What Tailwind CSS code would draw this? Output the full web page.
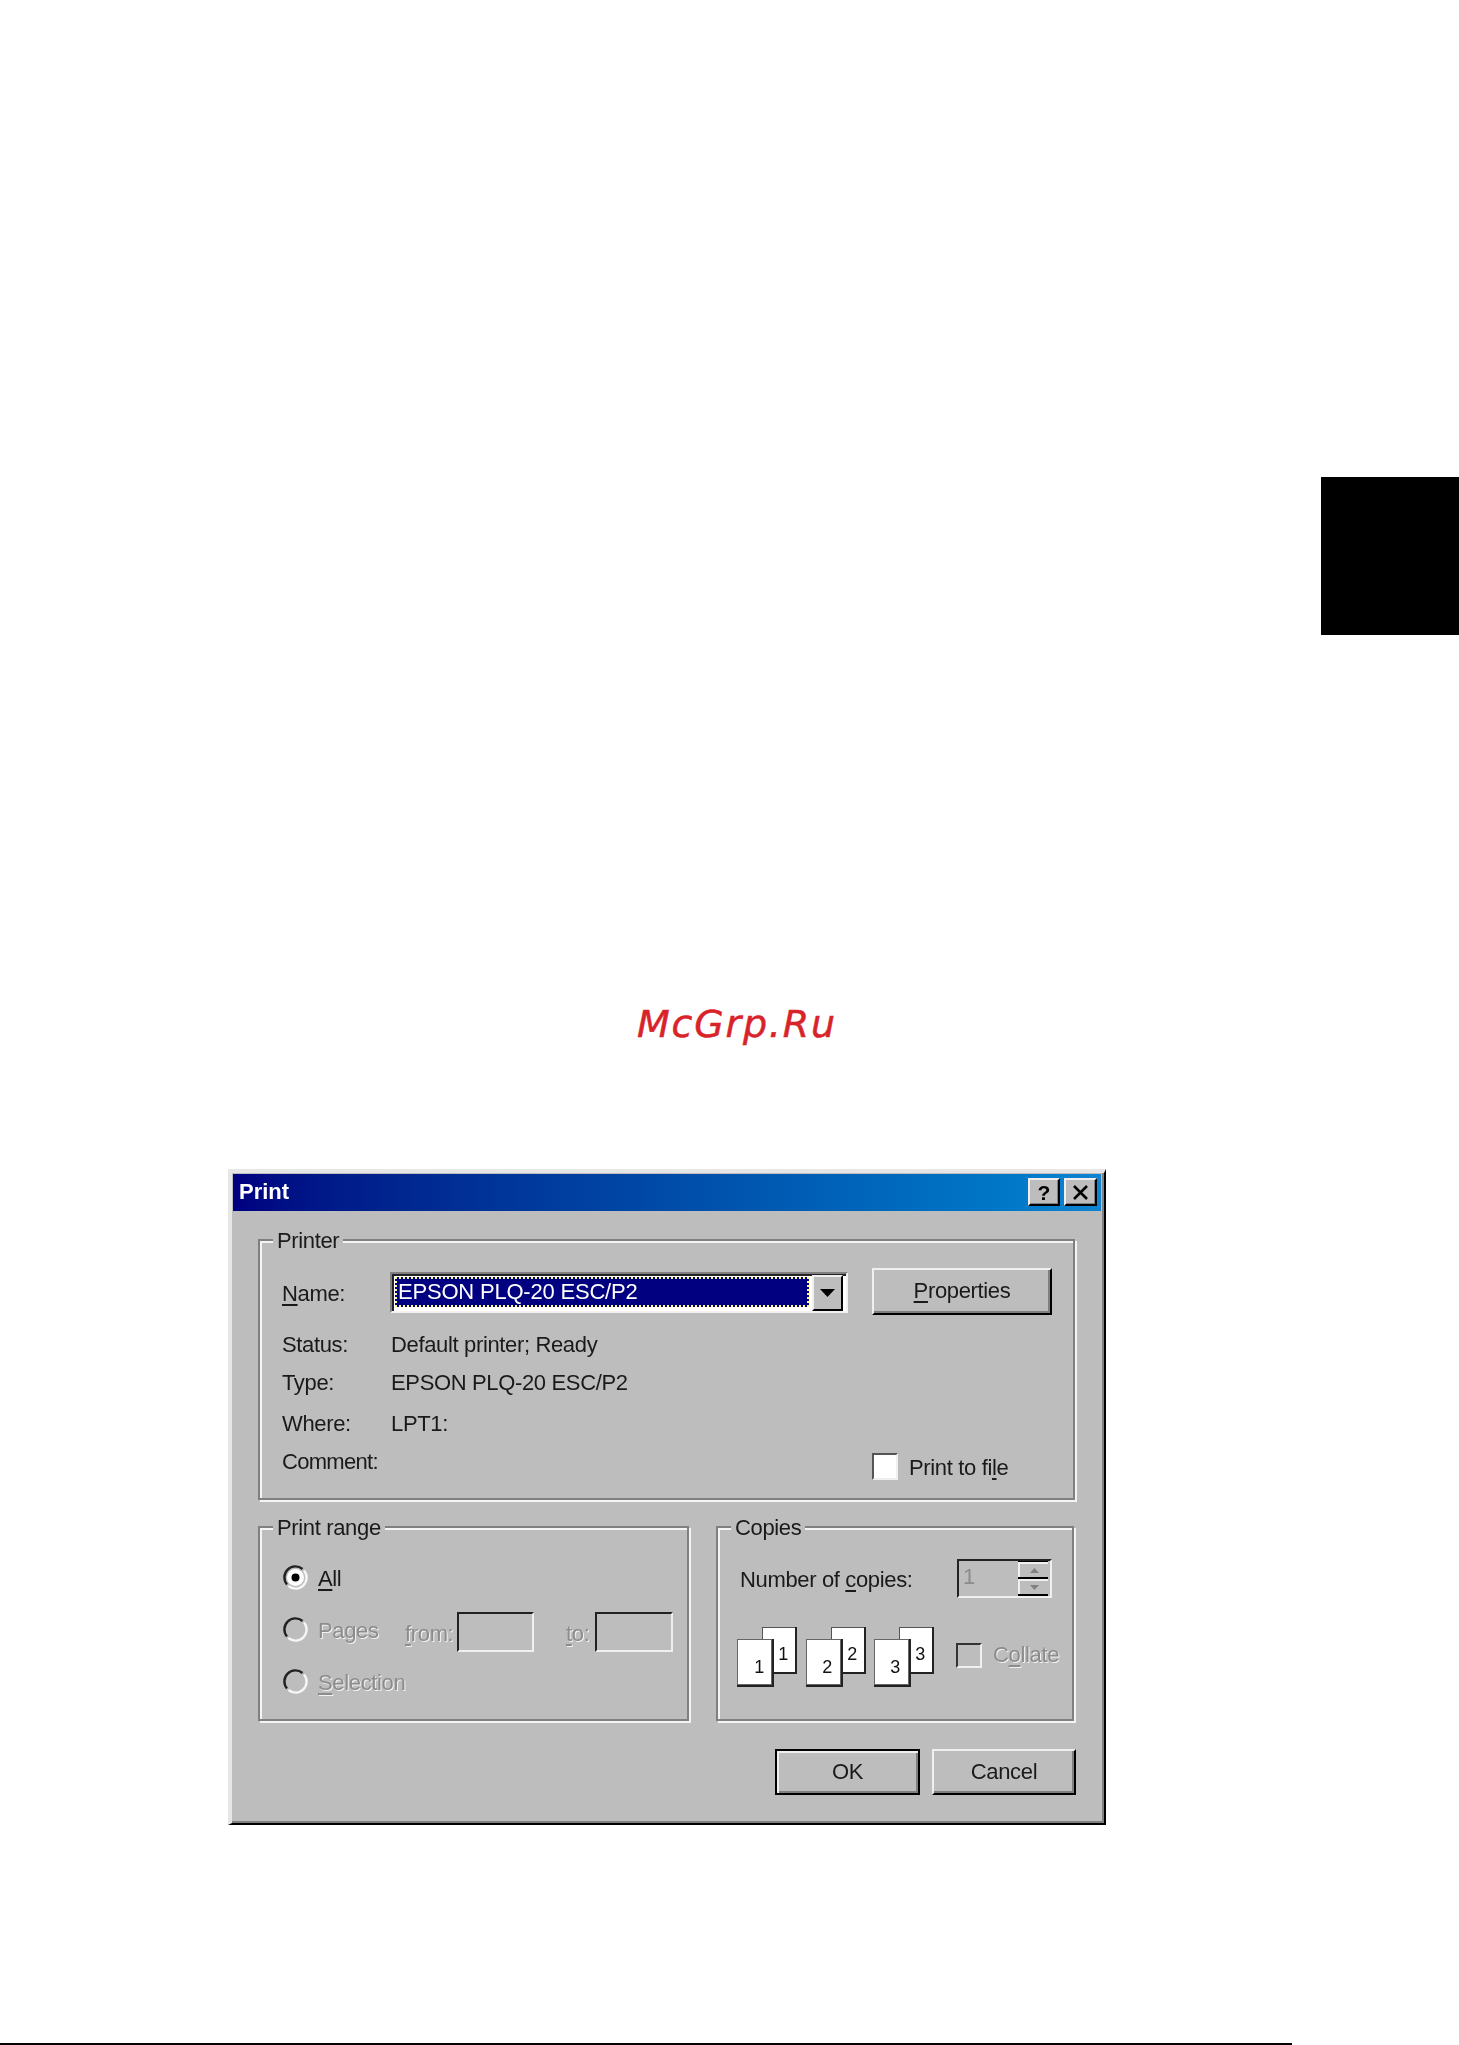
<!DOCTYPE html>
<html lang="en">
<head>
  <meta charset="UTF-8" />
  <title>Print</title>
  <script src="https://cdn.jsdelivr.net/npm/@tailwindcss/browser@4"></script>
</head>
<body class="w-[1459px] h-[2045px] flex flex-col bg-white overflow-hidden font-['Liberation_Sans',sans-serif]">

  <!-- Black index tab -->
  <div class="mt-[477px] self-end w-[138px] h-[158px] bg-black"></div>

  <!-- Watermark -->
  <div class="mt-[367px] ml-[637px] font-['DejaVu_Sans',sans-serif] italic text-[38px] leading-[44px] tracking-[1.8px] text-[#d9232b] [-webkit-text-stroke:0.5px_#d9232b]">McGrp.Ru</div>

  <!-- Print dialog -->
  <div class="mt-[123px] ml-[228px] w-[878px] h-[656px] bg-[#bdbdbd] border-t-4 border-l-4 border-r-2 border-b-2 border-t-[#e6e6e6] border-l-[#e6e6e6] border-r-black border-b-black shadow-[inset_-2px_-2px_0_#808080] blur-[0.4px] text-[22px] tracking-[-0.35px] text-[#1a1a1a]">

    <!-- Title bar -->
    <div class="mt-px ml-px w-[868px] h-[37px] pl-[6px] pr-1 flex justify-between bg-linear-to-r from-[#000080] to-[#1084d0]">
      <span class="font-bold text-white leading-[36px] tracking-normal text-[22px]">Print</span>
      <div class="flex gap-1 pt-1">
        <div class="w-8 h-7 bg-[#bdbdbd] border-2 border-t-[#efefef] border-l-[#efefef] border-r-black border-b-black shadow-[inset_-1px_-1px_0_#808080] flex items-center justify-center font-bold text-black text-[21px] leading-none tracking-normal">?</div>
        <div class="w-[33px] h-7 bg-[#bdbdbd] border-2 border-t-[#efefef] border-l-[#efefef] border-r-black border-b-black shadow-[inset_-1px_-1px_0_#808080] flex items-center justify-center">
          <svg width="17" height="15" viewBox="0 0 17 15"><path d="M2 1 L15 14 M15 1 L2 14" stroke="#000" stroke-width="2.6" fill="none"/></svg>
        </div>
      </div>
    </div>

    <div class="pl-[26px] pr-[28px]">

      <!-- Printer group -->
      <div class="relative mt-[28px] w-[817px] h-[261px] border-2 border-[#808080] shadow-[inset_2px_2px_0_#f4f4f4,2px_2px_0_#f4f4f4] flex">
        <span class="absolute left-[13px] top-[-15px] px-[4px] bg-[#bdbdbd] leading-[30px]">Printer</span>
        <div class="w-[612px] pl-[22px] pt-[31px]">
          <div class="flex items-center h-[41px]">
            <span class="w-[108px] pt-[1px]"><u class="underline-offset-[3px]">N</u>ame:</span>
            <div class="w-[458px] h-[41px] border-2 border-t-[#808080] border-l-[#808080] border-r-[#f2f2f2] border-b-[#f2f2f2] bg-white shadow-[inset_2px_2px_0_#222] flex pl-[3px] pt-[3px]">
              <div class="w-[414px] h-[30px] bg-[#000080] border-2 border-dotted border-[#ffff80] text-white pl-[1px] leading-[25px] tracking-[-0.2px]">EPSON PLQ-20 ESC/P2</div>
              <div class="ml-[3px] mt-[-2px] w-[31px] h-[36px] bg-[#bdbdbd] border-2 border-t-[#efefef] border-l-[#efefef] border-r-black border-b-black flex items-center justify-center">
                <svg width="15" height="8" viewBox="0 0 15 8"><path d="M0 0 H15 L7.5 8 Z" fill="#000"/></svg>
              </div>
            </div>
          </div>
          <div class="mt-[13px] grid grid-cols-[109px_1fr] leading-[38px]">
            <span>Status:</span><span>Default printer; Ready</span>
            <span>Type:</span><span>EPSON PLQ-20 ESC/P2</span>
            <span class="mt-[3px]">Where:</span><span class="mt-[3px]">LPT1:</span>
            <span class="tracking-[-0.7px]">Comment:</span><span></span>
          </div>
        </div>
        <div class="pt-[27px]">
          <div class="w-[180px] h-[47px] bg-[#bdbdbd] border-2 border-t-[#efefef] border-l-[#efefef] border-r-black border-b-black shadow-[inset_-2px_-2px_0_#808080] flex items-center justify-center pb-[2px]"><span><u class="underline-offset-[3px]">P</u>roperties</span></div>
          <div class="mt-[138px] flex gap-[11px]">
            <div class="w-[26px] h-[27px] bg-white border-2 border-t-[#555] border-l-[#555] border-r-[#efefef] border-b-[#efefef]"></div>
            <span class="leading-[27px] pt-[1px]">Print to fi<u class="underline-offset-[3px]">l</u>e</span>
          </div>
        </div>
      </div>

      <div class="mt-[26px] flex gap-[27px]">

        <!-- Print range group -->
        <div class="relative w-[431px] h-[195px] border-2 border-[#808080] shadow-[inset_2px_2px_0_#f4f4f4,2px_2px_0_#f4f4f4] pl-[23px] pt-[23px]">
          <span class="absolute left-[13px] top-[-15px] px-[4px] bg-[#bdbdbd] leading-[30px]">Print range</span>

          <div class="flex items-center h-[52px]">
            <svg class="w-[25px] h-[25px]" viewBox="0 0 25 25"><path d="M19.5 4 A11 11 0 0 0 4 19.5" stroke="#222" stroke-width="2.4" fill="none"/><path d="M5.5 21 A11 11 0 0 0 21 5.5" stroke="#f6f6f6" stroke-width="2.4" fill="none"/><circle cx="12.5" cy="12.5" r="8.5" fill="#fff"/><circle cx="12.5" cy="12.5" r="4" fill="#000"/></svg>
            <span class="ml-[10px] pt-[2px]"><u class="underline-offset-[3px]">A</u>ll</span>
          </div>

          <div class="flex items-center h-[52px] text-[#8c8c8c] [text-shadow:1px_1px_0_#f2f2f2]">
            <svg class="w-[25px] h-[25px]" viewBox="0 0 25 25"><path d="M19.5 4 A11 11 0 0 0 4 19.5" stroke="#222" stroke-width="2.4" fill="none"/><path d="M5.5 21 A11 11 0 0 0 21 5.5" stroke="#f6f6f6" stroke-width="2.4" fill="none"/></svg>
            <span class="ml-[10px] w-[87px] pt-[3px]">Pages</span>
            <span class="w-[52px] pt-[8px]"><u class="underline-offset-[3px]">f</u>rom:</span>
            <div class="mt-[5px] w-[77px] h-[40px] border-2 border-t-[#222] border-l-[#222] border-r-[#efefef] border-b-[#efefef]"></div>
            <span class="ml-[32px] w-[29px] pt-[8px]"><u class="underline-offset-[3px]">t</u>o:</span>
            <div class="mt-[5px] w-[78px] h-[40px] border-2 border-t-[#222] border-l-[#222] border-r-[#efefef] border-b-[#efefef]"></div>
          </div>

          <div class="flex items-center h-[52px] text-[#8c8c8c] [text-shadow:1px_1px_0_#f2f2f2]">
            <svg class="w-[25px] h-[25px]" viewBox="0 0 25 25"><path d="M19.5 4 A11 11 0 0 0 4 19.5" stroke="#222" stroke-width="2.4" fill="none"/><path d="M5.5 21 A11 11 0 0 0 21 5.5" stroke="#f6f6f6" stroke-width="2.4" fill="none"/></svg>
            <span class="ml-[10px] pt-[3px]"><u class="underline-offset-[3px]">S</u>election</span>
          </div>
        </div>

        <!-- Copies group -->
        <div class="relative w-[358px] h-[195px] border-2 border-[#808080] shadow-[inset_2px_2px_0_#f4f4f4,2px_2px_0_#f4f4f4]">
          <span class="absolute left-[13px] top-[-15px] px-[4px] bg-[#bdbdbd] leading-[30px]">Copies</span>

          <div class="mt-[31px] ml-[22px] flex">
            <span class="w-[217px] leading-[39px] pt-[1px]">Number of <u class="underline-offset-[3px]">c</u>opies:</span>
            <div class="w-[95px] h-[39px] border-2 border-t-[#222] border-l-[#222] border-r-[#efefef] border-b-[#efefef] flex justify-between pr-[2px]">
              <span class="pl-[4px] leading-[32px] text-[#8c8c8c]">1</span>
              <div class="w-[30px] flex flex-col bg-black gap-[2px] pt-[1px] pb-[2px]">
                <div class="flex-1 bg-[#bdbdbd] flex items-center justify-center border-t-2 border-l-2 border-[#efefef]"><svg width="9" height="5" viewBox="0 0 9 5"><path d="M0 5 H9 L4.5 0 Z" fill="#808080"/></svg></div>
                <div class="flex-1 bg-[#bdbdbd] flex items-center justify-center border-t-2 border-l-2 border-[#efefef]"><svg width="9" height="5" viewBox="0 0 9 5"><path d="M0 0 H9 L4.5 5 Z" fill="#808080"/></svg></div>
              </div>
            </div>
          </div>

          <div class="mt-[28px] ml-[19px] flex">
            <svg width="60" height="60" viewBox="0 0 60 60" class="mr-[9px]">
              <rect x="25.5" y="0.5" width="33" height="45" fill="#fff" stroke="#555"/><path d="M25 46 H59 V0" stroke="#222" stroke-width="2" fill="none"/>
              <rect x="0.5" y="12.5" width="34" height="45" fill="#fff" stroke="#666"/><path d="M0 59 H36 V12" stroke="#222" stroke-width="2" fill="none"/>
              <text x="22" y="46" font-family="Liberation Sans" font-size="18" text-anchor="middle" fill="#111">1</text>
              <text x="46" y="33" font-family="Liberation Sans" font-size="18" text-anchor="middle" fill="#111">1</text>
            </svg>
            <svg width="60" height="60" viewBox="0 0 60 60" class="mr-[8px]">
              <rect x="25.5" y="0.5" width="33" height="45" fill="#fff" stroke="#555"/><path d="M25 46 H59 V0" stroke="#222" stroke-width="2" fill="none"/>
              <rect x="0.5" y="12.5" width="34" height="45" fill="#fff" stroke="#666"/><path d="M0 59 H36 V12" stroke="#222" stroke-width="2" fill="none"/>
              <text x="21" y="46" font-family="Liberation Sans" font-size="18" text-anchor="middle" fill="#111">2</text>
              <text x="46" y="33" font-family="Liberation Sans" font-size="18" text-anchor="middle" fill="#111">2</text>
            </svg>
            <svg width="60" height="60" viewBox="0 0 60 60">
              <rect x="25.5" y="0.5" width="33" height="45" fill="#fff" stroke="#555"/><path d="M25 46 H59 V0" stroke="#222" stroke-width="2" fill="none"/>
              <rect x="0.5" y="12.5" width="34" height="45" fill="#fff" stroke="#666"/><path d="M0 59 H36 V12" stroke="#222" stroke-width="2" fill="none"/>
              <text x="21" y="46" font-family="Liberation Sans" font-size="18" text-anchor="middle" fill="#111">3</text>
              <text x="46" y="33" font-family="Liberation Sans" font-size="18" text-anchor="middle" fill="#111">3</text>
            </svg>
            <div class="ml-[22px] mt-[16px] w-[26px] h-[25px] border-2 border-t-[#333] border-l-[#333] border-r-[#efefef] border-b-[#efefef]"></div>
            <span class="ml-[11px] mt-[13px] leading-[30px] text-[#8c8c8c] [text-shadow:1px_1px_0_#f2f2f2]">C<u class="underline-offset-[3px]">o</u>llate</span>
          </div>
        </div>
      </div>

      <!-- Dialog buttons -->
      <div class="mt-[28px] flex justify-end gap-3">
        <div class="w-[145px] h-[46px] pb-[2px] bg-[#bdbdbd] border-2 border-black shadow-[inset_2px_2px_0_#efefef,inset_-2px_-2px_0_#808080] flex items-center justify-center">OK</div>
        <div class="w-[144px] h-[46px] pb-[2px] bg-[#bdbdbd] border-2 border-t-[#efefef] border-l-[#efefef] border-r-black border-b-black shadow-[inset_-2px_-2px_0_#808080] flex items-center justify-center">Cancel</div>
      </div>
    </div>
  </div>

  <!-- Footer rule -->
  <div class="mt-auto w-[1292px] h-[2px] bg-black"></div>

</body>
</html>
